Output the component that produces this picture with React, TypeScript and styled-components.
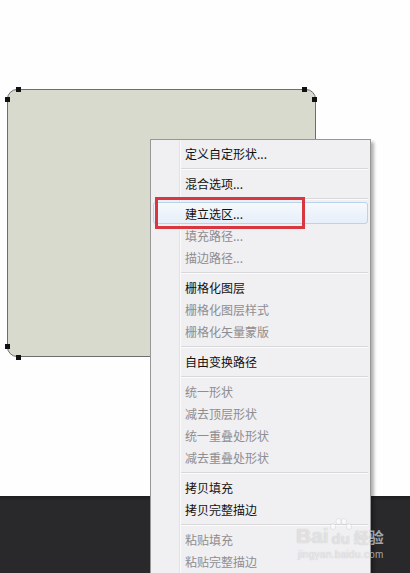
import styled, { createGlobalStyle } from "styled-components";

const GlobalStyle = createGlobalStyle`
  html, body {
    margin: 0;
    padding: 0;
    background: #fefefe;
  }
`;

const Page = styled.div`
  position: relative;
  width: 410px;
  height: 573px;
  overflow: hidden;
  display: flex;
  flex-direction: column;
  font-family: "Noto Sans CJK SC", "Liberation Sans", sans-serif;
`;

const Canvas = styled.div`
  height: 496px;
  background: #fefefe;
  padding: 89px 0 0 7px;
  box-sizing: border-box;
`;

const Shape = styled.div`
  position: relative;
  width: 309px;
  height: 268px;
  box-sizing: border-box;
  background: #d7dacd;
  border: 1px solid #6d6d6d;
  border-radius: 10px;
`;

const Handle = styled.span<{ $x: number; $y: number }>`
  position: absolute;
  left: ${(p) => p.$x}px;
  top: ${(p) => p.$y}px;
  width: 5px;
  height: 5px;
  background: #111;
`;

const Dock = styled.div`
  flex: 1;
  background: linear-gradient(#1e1d20 0px, #29282b 5px, #29282b 100%);
`;

const Menu = styled.div`
  position: absolute;
  left: 150px;
  top: 139px;
  width: 221px;
  height: 460px;
  box-sizing: border-box;
  padding: 2px;
  background: #f0eff1;
  border: 1px solid #979797;
  box-shadow: 3px 3px 3px rgba(0, 0, 0, 0.3);
  display: flex;
  flex-direction: column;
  &::before {
    content: "";
    position: absolute;
    left: 28px;
    top: 0;
    bottom: 0;
    width: 1px;
    background: #e2e1e3;
    box-shadow: 1px 0 0 #fbfbfb;
  }
`;

const Item = styled.div<{ $disabled?: boolean; $active?: boolean }>`
  position: relative;
  height: 22px;
  flex: none;
  box-sizing: border-box;
  display: flex;
  align-items: center;
  padding-left: 31px;
  font-size: 12px;
  color: ${(p) => (p.$disabled ? "#8e8d90" : "#111")};
  border: 1px solid ${(p) => (p.$active ? "#b9d3ef" : "transparent")};
  border-radius: 3px;
  background: ${(p) =>
    p.$active ? "linear-gradient(#f6f9fd, #e6eef9)" : "transparent"};
`;

const Separator = styled.div`
  height: 8px;
  flex: none;
  display: flex;
  align-items: center;
  padding-left: 27px;
  &::after {
    content: "";
    flex: 1;
    height: 1px;
    background: #d8d7da;
    box-shadow: 0 1px 0 #fbfbfb;
  }
`;

const Callout = styled.div`
  position: absolute;
  left: 155px;
  top: 197px;
  width: 150px;
  height: 32px;
  box-sizing: border-box;
  border: 3px solid #d9373f;
`;

const Watermark = styled.div`
  position: absolute;
  left: 296px;
  top: 518px;
  display: flex;
  flex-direction: column;
  align-items: flex-start;
  color: rgba(255, 255, 255, 0.6);
  text-shadow: 0 0 1px rgba(0, 0, 0, 0.25);
  font-family: "Liberation Sans", sans-serif;
`;

const Brand = styled.div`
  display: flex;
  align-items: flex-end;
  font-size: 21px;
  font-weight: 700;
  line-height: 24px;
`;

const Paw = styled.div`
  position: relative;
  width: 24px;
  height: 30px;
  display: flex;
  align-items: flex-end;
  justify-content: center;
  font-size: 15px;
  line-height: 19px;
`;

const BrandCn = styled.span`
  font-family: "Noto Sans CJK SC", sans-serif;
  font-size: 15px;
  font-weight: 700;
  line-height: 22px;
  margin-left: 1px;
`;

const Domain = styled.div`
  font-size: 10px;
  line-height: 13px;
  margin-left: 2px;
  letter-spacing: 0.3px;
`;

type Entry = { label?: string; disabled?: boolean; active?: boolean; sep?: boolean };

const entries: Entry[] = [
  { label: "定义自定形状..." },
  { sep: true },
  { label: "混合选项..." },
  { sep: true },
  { label: "建立选区...", active: true },
  { label: "填充路径...", disabled: true },
  { label: "描边路径...", disabled: true },
  { sep: true },
  { label: "栅格化图层" },
  { label: "栅格化图层样式", disabled: true },
  { label: "栅格化矢量蒙版", disabled: true },
  { sep: true },
  { label: "自由变换路径" },
  { sep: true },
  { label: "统一形状", disabled: true },
  { label: "减去顶层形状", disabled: true },
  { label: "统一重叠处形状", disabled: true },
  { label: "减去重叠处形状", disabled: true },
  { sep: true },
  { label: "拷贝填充" },
  { label: "拷贝完整描边" },
  { sep: true },
  { label: "粘贴填充", disabled: true },
  { label: "粘贴完整描边", disabled: true },
];

export default function App() {
  return (
    <Page>
      <GlobalStyle />
      <Canvas>
        <Shape>
          <Handle $x={8} $y={-3} />
          <Handle $x={-3} $y={7} />
          <Handle $x={294} $y={-3} />
          <Handle $x={304} $y={7} />
          <Handle $x={-3} $y={254} />
          <Handle $x={8} $y={265} />
        </Shape>
      </Canvas>
      <Dock />
      <Menu>
        {entries.map((e, i) =>
          e.sep ? (
            <Separator key={i} />
          ) : (
            <Item key={i} $disabled={e.disabled} $active={e.active}>
              {e.label}
            </Item>
          )
        )}
      </Menu>
      <Callout />
      <Watermark>
        <Brand>
          <span>Bai</span>
          <Paw>
            <svg
              width="24"
              height="12"
              viewBox="0 0 24 12"
              style={{ position: "absolute", left: 0, top: 0 }}
            >
              <g fill="rgba(255,255,255,0.6)" stroke="rgba(0,0,0,0.12)" strokeWidth="0.6">
                <ellipse cx="4" cy="8.5" rx="2.5" ry="3" />
                <ellipse cx="9.5" cy="3.5" rx="2.5" ry="3" />
                <ellipse cx="15" cy="3.5" rx="2.5" ry="3" />
                <ellipse cx="20" cy="8.5" rx="2.5" ry="3" />
              </g>
            </svg>
            du
          </Paw>
          <BrandCn>经验</BrandCn>
        </Brand>
        <Domain>jingyan.baidu.com</Domain>
      </Watermark>
    </Page>
  );
}
